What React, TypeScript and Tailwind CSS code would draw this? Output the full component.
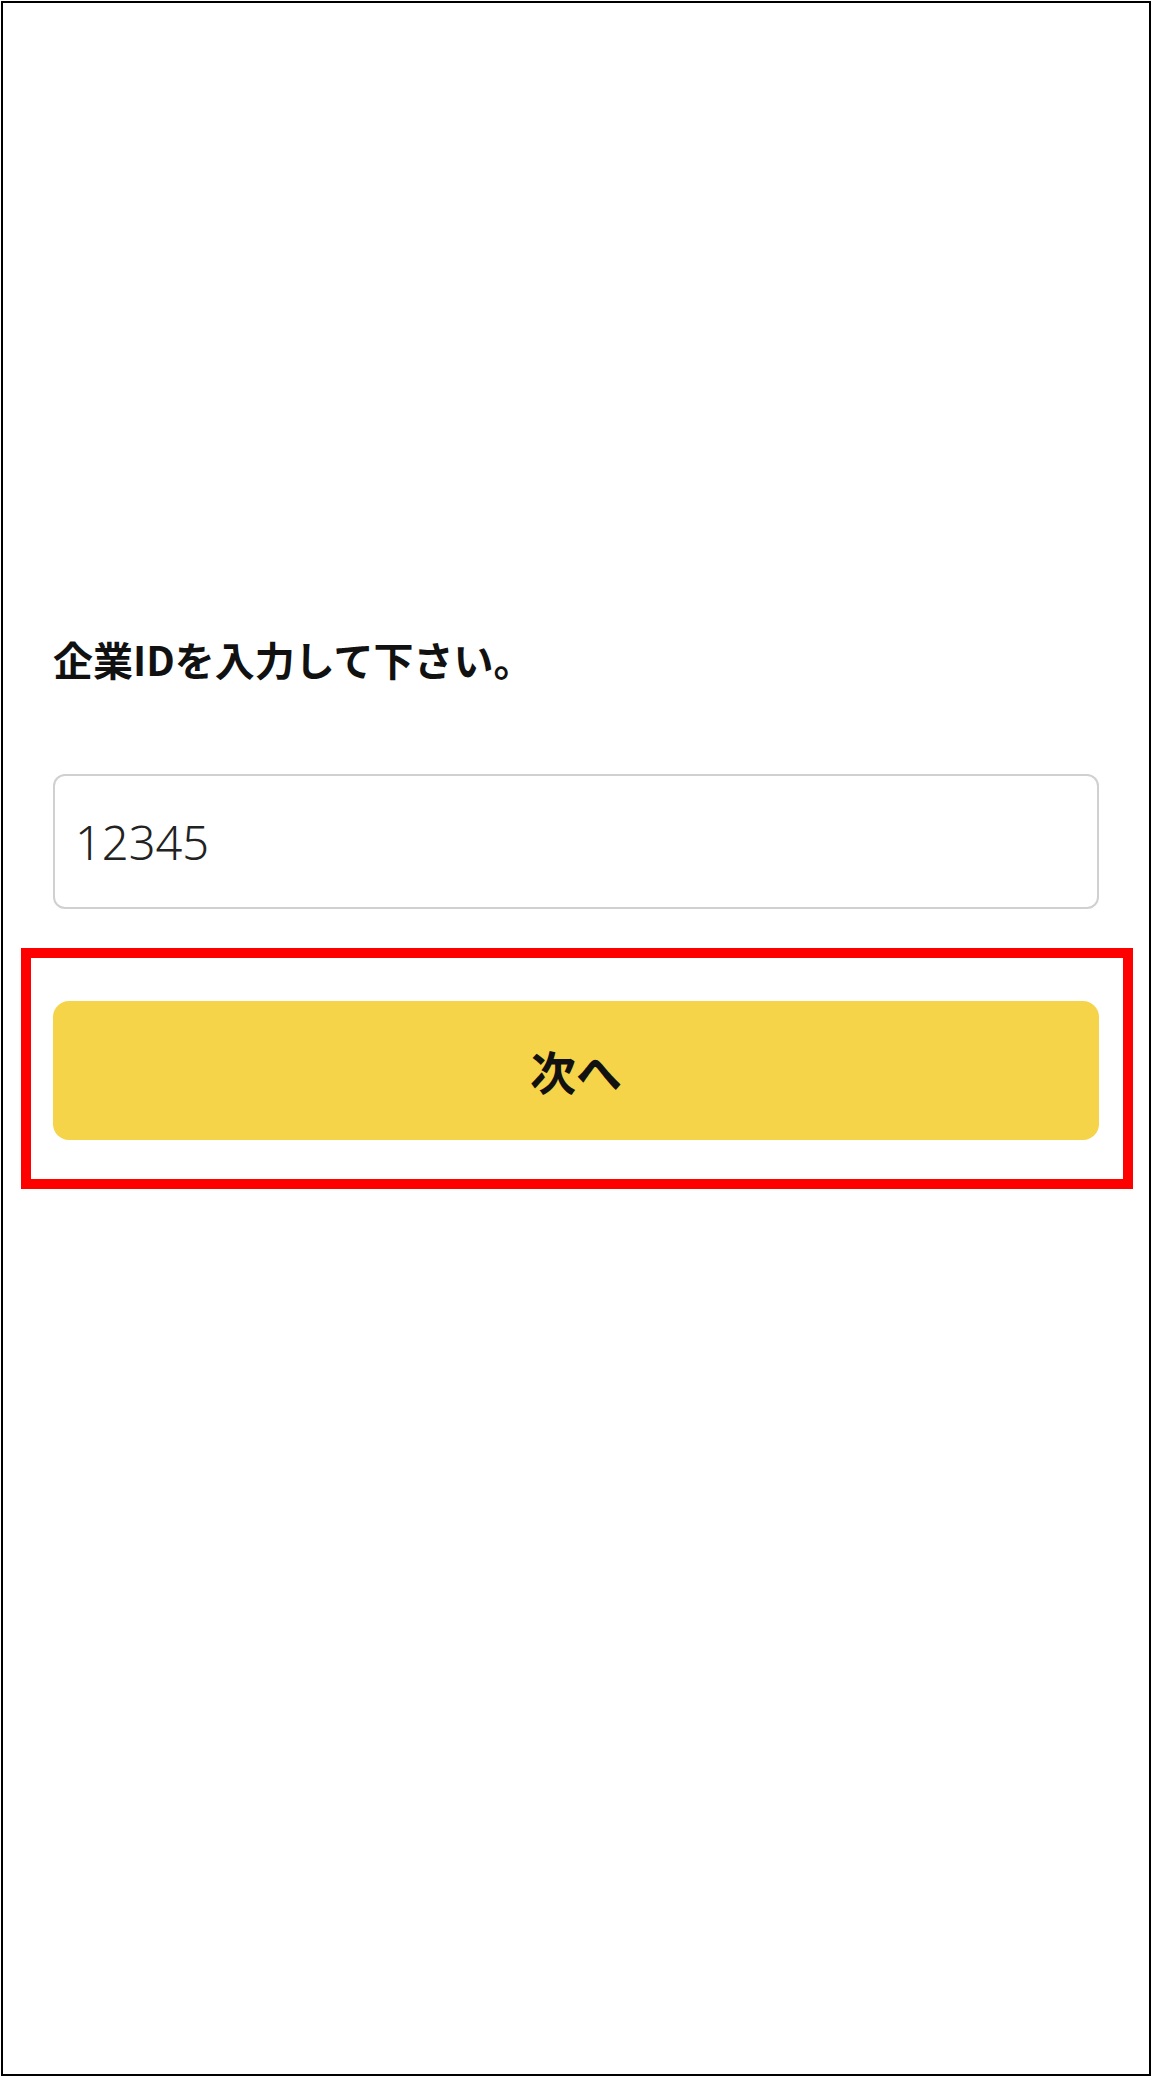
import { useState } from "react"

const font = { fontFamily: '"Noto Sans CJK JP", "Noto Sans", sans-serif' }

export default function App() {
  const [companyId, setCompanyId] = useState("12345")

  return (
    <div className="min-h-[2079px] bg-white pl-px pt-px" style={font}>
      <div className="flex h-[2075px] w-[1150px] flex-col border-2 border-black bg-white px-[50px] pt-[636px]">
        <p className="text-[40px] font-bold leading-none text-[#111]">企業IDを入力して下さい。</p>

        <input
          value={companyId}
          onChange={(e) => setCompanyId(e.target.value)}
          className="mt-[95px] h-[135px] w-full rounded-[12px] border-2 border-[#d0d0d0] bg-white pl-[20px] font-['Noto_Sans',sans-serif] text-[47px] font-light text-[#222] outline-none"
        />

        {/* highlighted area */}
        <div className="mt-[39px] -ml-[32px] -mr-[34px] border-[10px] border-[#ff0000] pt-[43px] pb-[39px] pl-[22px] pr-[24px]">
          <button
            type="button"
            className="flex h-[139px] w-full items-center justify-center rounded-[16px] bg-[#f6d449] text-[46px] font-bold text-[#111]"
          >
            次へ
          </button>
        </div>
      </div>
    </div>
  )
}
